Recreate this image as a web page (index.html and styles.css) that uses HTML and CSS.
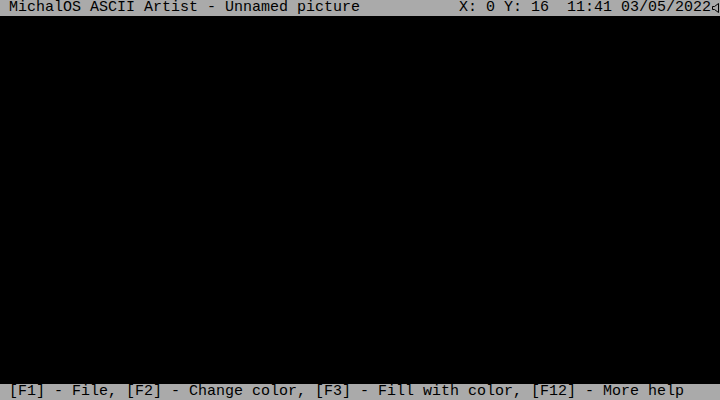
FILE: index.html
```html
<!DOCTYPE html>
<html lang="en">
<head>
    <meta charset="UTF-8">
    <title>MichalOS ASCII Artist</title>
    <link rel="stylesheet" href="styles.css">
</head>
<body>
    <div class="screen">
        <div class="bar top-bar">
            <span class="title">MichalOS ASCII Artist - Unnamed picture</span>
            <span class="status">X: 0 Y: 16  11:41 03/05/2022<svg class="speaker" width="9" height="16" viewBox="0 0 9 16"><path d="M1.5 6.5 H3.5 L7.5 3.5 V12.5 L3.5 9.5 H1.5 Z" fill="none" stroke="#000" stroke-width="1"/></svg></span>
        </div>
        <div class="canvas"></div>
        <div class="bar bottom-bar">
            <span class="help">[F1] - File, [F2] - Change color, [F3] - Fill with color, [F12] - More help</span>
        </div>
    </div>
</body>
</html>
```

FILE: styles.css
```css
* {
    margin: 0;
    padding: 0;
    box-sizing: border-box;
}

body {
    background-color: #000;
    font-family: "Liberation Mono", "DejaVu Sans Mono", monospace;
    font-size: 15px;
    line-height: 16px;
}

.screen {
    width: 720px;
    height: 400px;
    display: flex;
    flex-direction: column;
}

.bar {
    height: 16px;
    background-color: #aaaaaa;
    color: #000;
    white-space: pre;
    display: flex;
    justify-content: space-between;
    padding-left: 9px;
}

.status {
    display: flex;
    align-items: flex-start;
}

.speaker {
    display: block;
}

.canvas {
    flex: 1;
    background-color: #000;
}
```
